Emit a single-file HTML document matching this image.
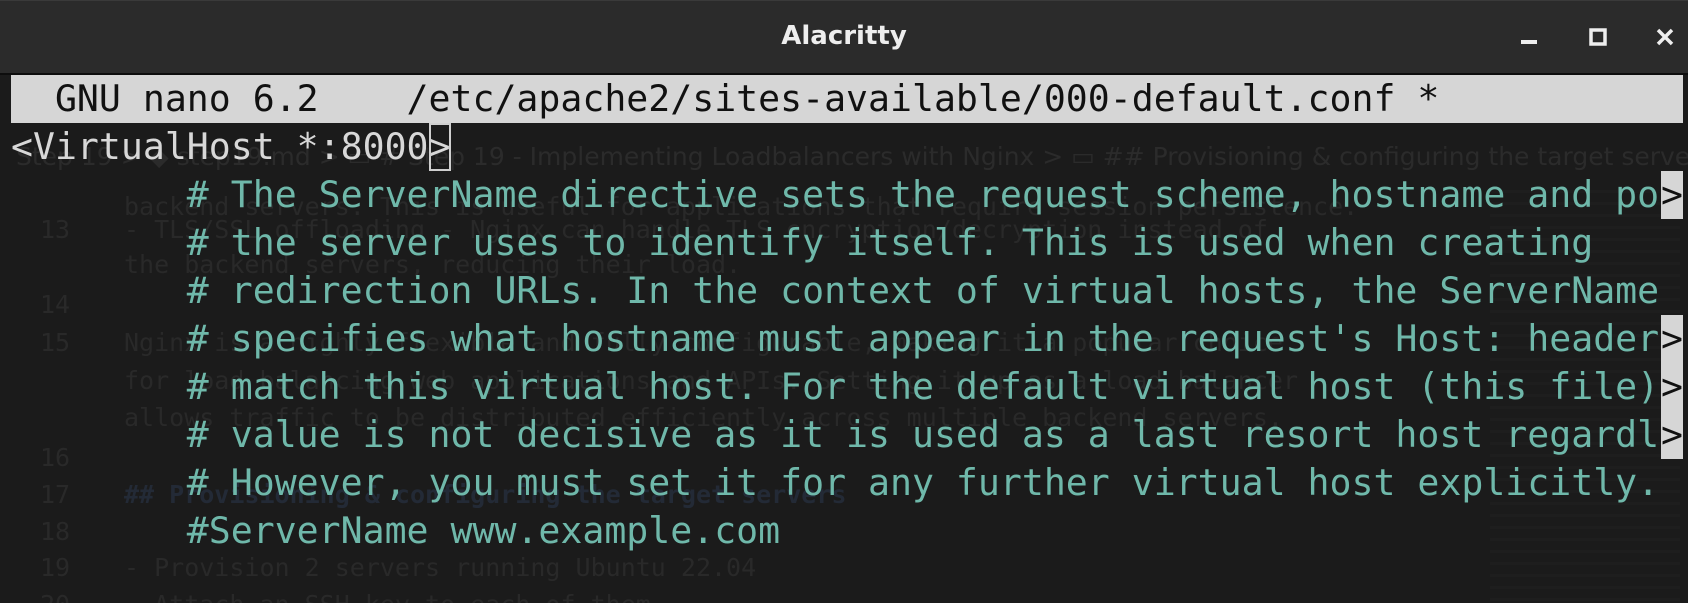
<!DOCTYPE html>
<html><head><style>
html,body{margin:0;padding:0;background:#1b1b1b;width:1688px;height:603px;overflow:hidden;position:relative}
#tb{position:absolute;left:0;top:0;width:1688px;height:73px;background:#2b2b2b;border-top:1px solid #3a3a3a;box-sizing:border-box}
#tb .t{position:absolute;left:0;width:1688px;top:20px;text-align:center;color:#eee;font:600 26px "DejaVu Sans","Liberation Sans",sans-serif}
#line{position:absolute;left:0;top:73px;width:1688px;height:2px;background:#0d0d0d}
#ghost{position:absolute;left:0;top:75px;width:1688px;height:528px;overflow:hidden}
.g{position:absolute;color:#292929;font:25px "DejaVu Sans Mono","Liberation Mono",monospace;white-space:pre}
.gs{position:absolute;color:#2b2b2b;font:25px "DejaVu Sans","Liberation Sans",sans-serif;white-space:pre}
.r{position:absolute;left:11px;height:48px;line-height:48px;font:36.5px "DejaVu Sans Mono","Liberation Mono",monospace;white-space:pre;color:#6fb8aa;padding-top:2px;box-sizing:border-box}
.hdr{background:#d6d6d6;color:#111;width:1672px}
.w{color:#d8d8d8}
.m{position:absolute;left:1661px;width:22px;height:48px;background:#d6d6d6;color:#111;line-height:48px;font:36.5px "DejaVu Sans Mono",monospace;padding-top:2px;box-sizing:border-box}
.cur{position:absolute;left:429px;top:123px;width:18px;height:44px;border:2px solid #cfcfcf}
</style></head><body>
<div id="tb"><div class="t">Alacritty</div>
<svg style="position:absolute;left:1510px;top:25px" width="170" height="30">
<rect x="11" y="14" width="16" height="4" fill="#eee"/>
<rect x="81" y="4" width="14" height="14" fill="none" stroke="#eee" stroke-width="3.5"/>
<path d="M148 4 L162 18 M162 4 L148 18" stroke="#eee" stroke-width="3.5"/>
</svg></div>
<div id="line"></div>

<div id="ghost">
<div class="gs" style="left:16px;top:67px">Step 19 &gt; ◆ step19.md &gt; ▭ # Step 19 - Implementing Loadbalancers with Nginx &gt; ▭ ## Provisioning &amp; configuring the target servers</div>
<div class="g" style="left:124px;top:117px">backend servers. This is useful for applications that require session persistence.</div>
<div class="g" style="left:40px;top:140px">13</div>
<div class="g" style="left:124px;top:140px">- TLS/SSL offloading - Nginx can handle TLS encryption/decryption instead of</div>
<div class="g" style="left:124px;top:175px">the backend servers, reducing their load.</div>
<div class="g" style="left:40px;top:215px">14</div>
<div class="g" style="left:40px;top:253px">15</div>
<div class="g" style="left:124px;top:253px">Nginx is a highly flexible and fully configurable, making it a popular choice</div>
<div class="g" style="left:124px;top:291px">for load balancing web applications and APIs. Setting it up as a load balancer</div>
<div class="g" style="left:124px;top:328px">allows traffic to be distributed efficiently across multiple backend servers.</div>
<div class="g" style="left:40px;top:368px">16</div>
<div class="g" style="left:40px;top:405px">17</div>
<div class="g" style="left:124px;top:405px;color:#232a36;font-weight:bold">## Provisioning &amp; configuring the target servers</div>
<div class="g" style="left:40px;top:442px">18</div>
<div class="g" style="left:40px;top:478px">19</div>
<div class="g" style="left:124px;top:478px">- Provision 2 servers running Ubuntu 22.04</div>
<div class="g" style="left:40px;top:515px">20</div>
<div class="g" style="left:124px;top:515px">- Attach an SSH key to each of them</div>
<div style="position:absolute;left:1490px;top:115px;width:190px;height:413px;background:repeating-linear-gradient(#202020 0 3px,transparent 3px 12px);opacity:.7"></div>
</div>

<div class="r hdr" style="top:75px">  GNU nano 6.2    /etc/apache2/sites-available/000-default.conf *</div>
<div class="r w" style="top:123px">&lt;VirtualHost *:8000&gt;</div>
<div class="cur"></div>
<div class="r" style="top:171px">        # The ServerName directive sets the request scheme, hostname and po</div>
<div class="r" style="top:219px">        # the server uses to identify itself. This is used when creating</div>
<div class="r" style="top:267px">        # redirection URLs. In the context of virtual hosts, the ServerName</div>
<div class="r" style="top:315px">        # specifies what hostname must appear in the request's Host: header</div>
<div class="r" style="top:363px">        # match this virtual host. For the default virtual host (this file)</div>
<div class="r" style="top:411px">        # value is not decisive as it is used as a last resort host regardl</div>
<div class="r" style="top:459px">        # However, you must set it for any further virtual host explicitly.</div>
<div class="r" style="top:507px">        #ServerName www.example.com</div>
<div class="m" style="top:171px">&gt;</div>
<div class="m" style="top:315px">&gt;</div>
<div class="m" style="top:363px">&gt;</div>
<div class="m" style="top:411px">&gt;</div>
</body></html>
